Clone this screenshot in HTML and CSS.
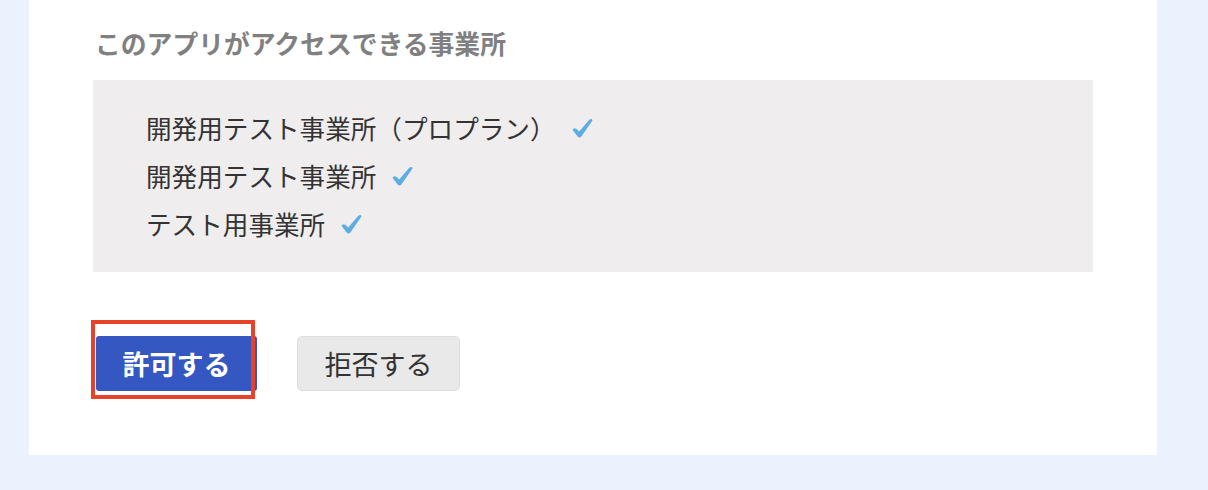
FILE: index.html
```html
<!DOCTYPE html>
<html lang="ja">
<head>
<meta charset="utf-8">
<title>アクセス許可</title>
<link rel="stylesheet" href="styles.css">
</head>
<body>
<div class="card">
  <h2 class="heading">このアプリがアクセスできる事業所</h2>
  <ul class="offices">
    <li>開発用テスト事業所（プロプラン）<svg class="check" viewBox="0 0 24 22" width="24" height="22"><path d="M2.5 12.8 Q4 10.2 6.3 11.8 L9.2 14.6 L19.3 2.8 Q21.6 1 22.6 3.2 L11.4 19.4 Q9.6 21.6 7.6 19.6 Z" fill="#5dade2"/></svg></li>
    <li>開発用テスト事業所<svg class="check" viewBox="0 0 24 22" width="24" height="22"><path d="M2.5 12.8 Q4 10.2 6.3 11.8 L9.2 14.6 L19.3 2.8 Q21.6 1 22.6 3.2 L11.4 19.4 Q9.6 21.6 7.6 19.6 Z" fill="#5dade2"/></svg></li>
    <li>テスト用事業所<svg class="check" viewBox="0 0 24 22" width="24" height="22"><path d="M2.5 12.8 Q4 10.2 6.3 11.8 L9.2 14.6 L19.3 2.8 Q21.6 1 22.6 3.2 L11.4 19.4 Q9.6 21.6 7.6 19.6 Z" fill="#5dade2"/></svg></li>
  </ul>
  <div class="actions">
    <div class="allow-wrap">
      <button class="btn btn-allow">許可する</button>
      <div class="highlight"></div>
    </div>
    <button class="btn btn-deny">拒否する</button>
  </div>
</div>
</body>
</html>
```
FILE: styles.css
```css
html, body {
  margin: 0;
  padding: 0;
}
body {
  background: #ecf2fd;
  font-family: "Noto Sans CJK JP", "Noto Sans", sans-serif;
  height: 490px;
  overflow: hidden;
}
.card {
  background: #ffffff;
  margin-left: 29px;
  width: 1128px;
  box-sizing: border-box;
  padding: 24px 64px 64px 64px;
}
.heading {
  margin: 0 0 18px 0;
  font-size: 25.8px;
  line-height: 38px;
  font-weight: bold;
  color: #808080;
  padding-left: 2px;
}
.offices {
  list-style: none;
  margin: 0;
  background: #efedee;
  padding: 24px 0 24px 53px;
}
.offices li {
  font-size: 25.6px;
  line-height: 48px;
  height: 48px;
  color: #333333;
  display: flex;
  align-items: center;
}
.check {
  display: block;
  margin-left: 14px;
  margin-top: -1px;
}
.actions {
  display: flex;
  gap: 40px;
  margin-top: 64px;
  padding-left: 3px;
}
.allow-wrap {
  position: relative;
}
.btn {
  font-family: "Noto Sans CJK JP", "Noto Sans", sans-serif;
  font-size: 27px;
  height: 55px;
  border-radius: 3px;
  padding: 0;
  cursor: pointer;
  line-height: 1;
}
.btn-allow {
  width: 161px;
  background: #3557c1;
  color: #ffffff;
  font-weight: bold;
  border: none;
}
.btn-deny {
  width: 163px;
  background: #e9e9e9;
  color: #333333;
  border: 1px solid #dedede;
  border-radius: 5px;
}
.highlight {
  position: absolute;
  left: -5px;
  top: -16px;
  width: 164px;
  height: 79px;
  box-sizing: border-box;
  border: 4px solid #e8432a;
  pointer-events: none;
}
```
